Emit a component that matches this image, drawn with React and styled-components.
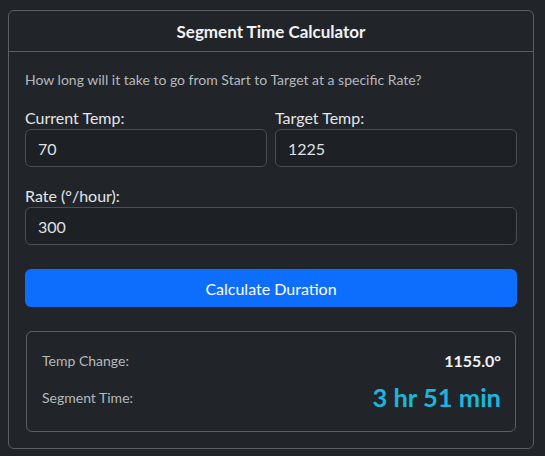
import React from 'react';
import styled, { createGlobalStyle } from 'styled-components';

const Global = createGlobalStyle`
  body {
    margin: 0;
    background: #212529;
    font-family: "Segoe UI", Lato, "Noto Sans", sans-serif;
    color: #dee2e6;
  }
`;

const Page = styled.div`
  padding: 10px 11px 7px 8px;
`;

const Card = styled.div`
  border: 1px solid #5a5f64;
  border-radius: 6px;
  background: #212529;
`;

const Header = styled.div`
  height: 40px;
  display: flex;
  align-items: center;
  justify-content: center;
  border-bottom: 1px solid #5a5f64;
  font-weight: 700;
  font-size: 17px;
  color: #f1f3f5;
`;

const Body = styled.div`
  padding: 17px 16px 16px;
`;

const Intro = styled.p`
  margin: 0 0 17px;
  font-size: 14px;
  line-height: 21px;
  color: #b4b9be;
`;

const Row = styled.div`
  display: grid;
  grid-template-columns: ${p => (p.cols === 2 ? '1fr 1fr' : '1fr')};
  gap: 8px;
  margin-bottom: 18px;
`;

const Field = styled.label`
  display: flex;
  flex-direction: column;
  min-width: 0;
`;

const Label = styled.span`
  font-size: 16px;
  line-height: 22px;
  color: #e3e6e9;
`;

const Input = styled.input`
  box-sizing: border-box;
  width: 100%;
  height: 38px;
  padding: 0 12px;
  background: #1d2024;
  border: 1px solid #4a4f54;
  border-radius: 6px;
  color: #dee2e6;
  font: inherit;
  font-size: 16px;
  outline: none;
`;

const Button = styled.button`
  display: block;
  width: 100%;
  height: 38px;
  margin: 24px 0 24px;
  border: none;
  border-radius: 6px;
  background: #0d6efd;
  color: #fff;
  font: inherit;
  font-size: 16px;
`;

const Result = styled.div`
  margin: 0 1px;
  border: 1px solid #5a5f64;
  border-radius: 6px;
  padding: 16px 14px 17px 15px;
  display: flex;
  flex-direction: column;
  gap: 8px;
`;

const ResultRow = styled.div`
  display: flex;
  justify-content: space-between;
  align-items: center;
  height: ${p => (p.big ? '34px' : '24px')};
`;

const Key = styled.span`
  font-size: 14px;
  color: #b4b9be;
`;

const Value = styled.span`
  font-weight: 700;
  font-size: ${p => (p.big ? '25.5px' : '16px')};
  color: ${p => (p.big ? '#1cb5dd' : '#f1f3f5')};
`;

export default function App() {
  return (
    <Page>
      <Global />
      <Card>
        <Header>Segment Time Calculator</Header>
        <Body>
          <Intro>How long will it take to go from Start to Target at a specific Rate?</Intro>
          <Row cols={2}>
            <Field>
              <Label>Current Temp:</Label>
              <Input defaultValue="70" />
            </Field>
            <Field>
              <Label>Target Temp:</Label>
              <Input defaultValue="1225" />
            </Field>
          </Row>
          <Row cols={1}>
            <Field>
              <Label>Rate (°/hour):</Label>
              <Input defaultValue="300" />
            </Field>
          </Row>
          <Button>Calculate Duration</Button>
          <Result>
            <ResultRow>
              <Key>Temp Change:</Key>
              <Value>1155.0°</Value>
            </ResultRow>
            <ResultRow big>
              <Key>Segment Time:</Key>
              <Value big>3 hr 51 min</Value>
            </ResultRow>
          </Result>
        </Body>
      </Card>
    </Page>
  );
}
